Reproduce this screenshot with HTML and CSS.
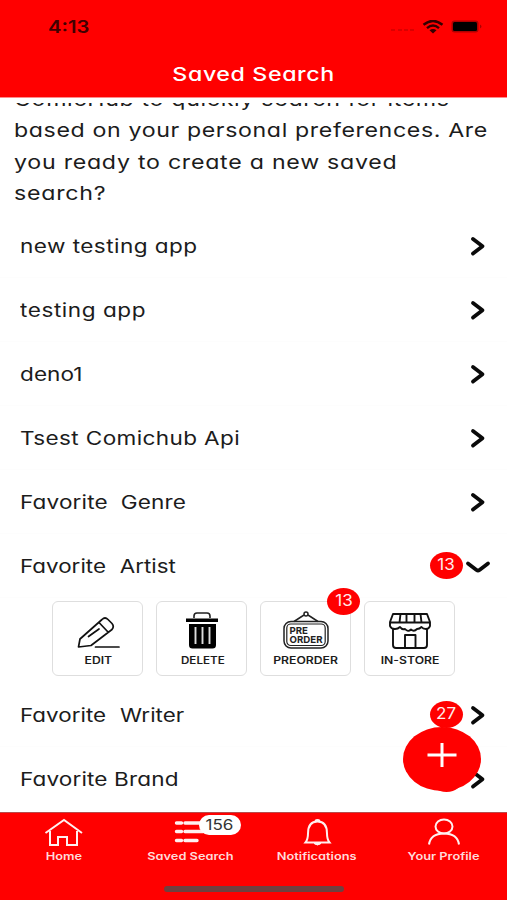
FILE: index.html
```html
<!DOCTYPE html>
<html lang="en">
<head>
<meta charset="utf-8">
<title>Saved Search</title>
<link rel="stylesheet" href="styles.css">
</head>
<body>
<div class="app">
  <header class="top">
    <div class="status">
      <span class="time"><span class="wide">4:13</span></span>
      <span class="signal">
        <svg class="dots" width="26" height="4" viewBox="0 0 26 4"><path d="M1 2h4M8 2h4M14 2h4M20 2h4"/></svg>
        <svg width="22" height="14" viewBox="0 0 22 14"><g fill="none" stroke="#300" stroke-width="2.4"><path d="M1.5 4.8Q11-3 20.500 4.800"/><path d="M5 8.200Q11 3 17 8.200"/></g><path d="M7.500 10.300Q11 7.500 14.500 10.300L11 13.500z" fill="#300"/></svg>
        <svg class="battery" width="32" height="14" viewBox="0 0 32 14"><rect x=".5" y=".5" width="27" height="12" rx="3" fill="#b00000"/><rect x="2" y="2" width="24" height="9" rx="1.500"/><path d="M29 4.500q3 2 0 4z" fill="#a00"/></svg>
      </span>
    </div>
    <h1 class="title"><span class="wide">Saved Search</span></h1>
  </header>
  <main class="content">
    <p class="intro">
      <span class="wide l1">ComicHub to quickly search for items</span>
      <span class="wide l2">based on your personal preferences. Are</span>
      <span class="wide l3">you ready to create a new saved</span>
      <span class="wide l4">search?</span>
    </p>
    <ul class="list">
      <li class="row"><span class="wide r1">new testing app</span><svg class="chev" viewBox="0 0 18 22"><path d="M5 4l9.500 7.200L5 18.500"/></svg></li>
      <li class="row"><span class="wide r2">testing app</span><svg class="chev" viewBox="0 0 18 22"><path d="M5 4l9.500 7.200L5 18.500"/></svg></li>
      <li class="row"><span class="wide r3">deno1</span><svg class="chev" viewBox="0 0 18 22"><path d="M5 4l9.500 7.200L5 18.500"/></svg></li>
      <li class="row"><span class="wide r4">Tsest Comichub Api</span><svg class="chev" viewBox="0 0 18 22"><path d="M5 4l9.500 7.200L5 18.500"/></svg></li>
      <li class="row"><span class="wide r5">Favorite&nbsp; Genre</span><svg class="chev" viewBox="0 0 18 22"><path d="M5 4l9.500 7.200L5 18.500"/></svg></li>
      <li class="row open"><span class="wide r6">Favorite&nbsp; Artist</span><b class="badge"><span class="wide">13</span></b><svg class="down" viewBox="0 0 26 22"><path d="M3 8.500L11.500 15Q13 16 14.500 15L23 8.500"/></svg></li>
      <li class="tiles">
        <div class="tile">
          <svg width="44" height="40" viewBox="0 0 44 40" fill="none" stroke="#111" stroke-width="1.700" stroke-linejoin="round" stroke-linecap="round"><path d="M2.500 36L4 28 26 8.500q3-3 6 0l4 4q2.500 3 0 6L15 34.500zM23 11.500l9 9.500M12.500 25.500l10.500-7.500M19.500 36h23.500"/></svg>
          <span class="wide">EDIT</span>
        </div>
        <div class="tile">
          <svg width="34" height="40" viewBox="0 0 34 40"><path d="M9 7V5q0-3 3-3h10q3 0 3 3v2" fill="none" stroke="#222" stroke-width="1.600"/><path d="M1 7.500h32V11H1zM4 13h27v21q0 3.500-3.500 3.500h-20Q4 37.500 4 34z"/><path d="M10.500 16v17M17.500 16v17M24.500 16v17" stroke="#ddd" stroke-width="1.900"/></svg>
          <span class="wide t-del">DELETE</span>
        </div>
        <div class="tile">
          <b class="badge over"><span class="wide">13</span></b>
          <svg width="46" height="40" viewBox="0 0 46 40" fill="none" stroke="#222" stroke-width="1.500"><path d="M11 10.500l10-6.500M35 10.500L25 4"/><circle cx="23" cy="3" r="2"/><rect x="1" y="10.500" width="44" height="26.500" rx="7"/><rect x="3.800" y="13" width="38.400" height="21.500" rx="4" stroke-width="1.200"/><g class="sign"><text x="6.500" y="22.500" textLength="18.500" lengthAdjust="spacingAndGlyphs">PRE</text><text x="6.500" y="31.500" textLength="33" lengthAdjust="spacingAndGlyphs">ORDER</text></g></svg>
          <span class="wide">PREORDER</span>
        </div>
        <div class="tile">
          <svg width="44" height="40" viewBox="0 0 44 40" fill="none" stroke="#111" stroke-width="1.900" stroke-linejoin="round"><path d="M5 3h34l3 8v4q-1 3-4 3-3 0-4.500-2-2 2-4.500 2-3 3-6 .500Q20 21.500 17 18q-3 1-5-2-2 2-5 2-4 0-5-3v-4zM2 11.500h40M12.500 3l-1 8.500M18.500 3v8.500M26.500 3v8.500M32.500 3l1 8.500M5 18v16q0 3 3 3h28q3 0 3-3V18M17 37V24h10.500v13"/></svg>
          <span class="wide">IN-STORE</span>
        </div>
      </li>
      <li class="row"><span class="wide r7">Favorite&nbsp; Writer</span><b class="badge"><span class="wide">27</span></b><svg class="chev" viewBox="0 0 18 22"><path d="M5 4l9.500 7.200L5 18.500"/></svg></li>
      <li class="row"><span class="wide r8">Favorite Brand</span><b class="badge blank"></b><svg class="chev" viewBox="0 0 18 22"><path d="M5 4l9.500 7.200L5 18.500"/></svg></li>
    </ul>
    <button class="fab" aria-label="Add"><svg width="30" height="26" viewBox="0 0 30 26"><path d="M15 1v24M.5 13h29" stroke="#fff" stroke-width="3"/></svg></button>
  </main>
  <nav class="tabs">
    <a class="tab"><svg width="40" height="30" viewBox="0 0 40 30"><path d="M2.500 15L21 2l18 13M7 13v14h8v-8h9v8h10V13"/></svg><span class="wide t1">Home</span></a>
    <a class="tab"><svg width="40" height="30" viewBox="0 0 40 30"><path d="M6.500 5h5M6.500 13.500h5M6.500 22.500h5M15 5h20M15 13.500h18M15 22.500h12" stroke-width="3.400" stroke-linecap="round"/></svg><b class="count"><span class="wide">156</span></b><span class="wide t2">Saved Search</span></a>
    <a class="tab"><svg width="40" height="30" viewBox="0 0 40 30"><path d="M8.500 24.500q2.500-3 2.500-9Q11 3.500 20.500 3.500T30 15.500q0 6 2.500 9zM18 3q2.500-2 5 0"/><path d="M17 25.500h7q-3.500 3-7 0z" fill="#fff" stroke-width="1"/></svg><span class="wide t3">Notifications</span></a>
    <a class="tab"><svg width="40" height="30" viewBox="0 0 40 30"><ellipse cx="20" cy="8.500" rx="8.500" ry="7"/><path d="M5 26.500q1.500-11 15-11t15 11"/></svg><span class="wide t4">Your Profile</span></a>
    <i class="handle"></i>
  </nav>
</div>
</body>
</html>
```
FILE: styles.css
```css
* { box-sizing: border-box; }
body { margin: 0; font-family: Inter, "Open Sans", sans-serif; color: #1c1c1c; background: #fff; }
.app { width: 507px; height: 900px; display: flex; flex-direction: column; overflow: hidden; }
.wide { display: inline-block; white-space: nowrap; transform: scaleX(1.22); transform-origin: left center; font-feature-settings: "cv11", "ss03"; }

.top { height: 98px; flex: none; background: #f00; border-bottom: 1px solid #ff8a8a; box-shadow: 0 5px 0 #fff; position: relative; z-index: 2; }
.status { height: 54px; display: flex; justify-content: space-between; align-items: center; padding: 0 24px 0 48px; }
.time { font-size: 17px; font-weight: 600; color: #400000; }
.time .wide { transform: scaleX(1.19); }
.signal { display: flex; align-items: center; gap: 6px; }
.dots { fill: none; stroke: #d00000; stroke-width: 1.5; margin-top: 6px; }
.battery { margin-left: 1px; }
.title { margin: 0; font-size: 19px; line-height: 42px; font-weight: 500; color: #fff; text-align: center; }
.title .wide { transform-origin: center; letter-spacing: .5px; }

.content { flex: 1; min-height: 0; position: relative; }
.intro { margin: -14px 0 0; padding-left: 14px; font-size: 19px; line-height: 31.3px; display: flex; flex-direction: column; align-items: flex-start; }
.intro .l1 { letter-spacing: .54px; }
.intro .l2 { letter-spacing: .5px; }
.intro .l3, .intro .l4 { letter-spacing: .6px; }

.list { list-style: none; margin: 5px 0 0; padding: 0; }
.row { height: 64px; display: flex; align-items: center; padding: 0 21.500px 0 20px; font-size: 18.500px; border-bottom: 1px solid #fdfdfd; }
.row > .wide { margin-right: auto; letter-spacing: .3px; }
.row > .r1 { letter-spacing: .36px; }
.row > .r2 { letter-spacing: .45px; }
.row > .r3 { letter-spacing: .05px; }
.row > .r5 { letter-spacing: .12px; }
.row > .r6 { letter-spacing: 0; word-spacing: .5px; }
.row > .r7 { letter-spacing: .02px; word-spacing: .5px; }
.row > .r8 { letter-spacing: .1px; }
.row > .r6, .row > .r7 { transform: scaleX(1.21); }
.chev { width: 18px; height: 22px; }
.down { width: 26px; height: 22px; margin-right: -5px; }
.chev path, .down path { fill: none; stroke: #0a0a0a; stroke-width: 3.800; stroke-linecap: round; stroke-linejoin: round; }
.badge { width: 33px; height: 27px; border-radius: 50%; background: #f00; color: #ffecec; font-size: 15.500px; font-weight: 400; line-height: 26px; text-align: center; margin-right: 5px; }
.badge .wide { transform: scaleX(1.1); transform-origin: center; }
.open .badge { margin-right: 2px; }

.tiles { display: flex; gap: 13px; padding: 3px 52px 8px; height: 85px; }
.tile { width: 91px; height: 75px; border: 1.500px solid #dedede; border-radius: 6px; display: flex; flex-direction: column; align-items: center; padding-top: 9px; position: relative; }
.tile > .wide { font-size: 10px; font-weight: 600; line-height: 18px; transform-origin: center; margin-left: 1px; }
.tile > .t-del { transform: scaleX(1.16); margin-left: 2px; }
.tile > .over { position: absolute; right: -10px; top: -14px; margin: 0; }
.sign { fill: #222; stroke: none; font-size: 9.500px; font-weight: 700; }

.fab { position: absolute; left: 403px; top: 629px; width: 78px; height: 64px; border: 0; border-radius: 50%; background: #f00; display: flex; align-items: center; justify-content: center; padding: 0 0 8px; }

.tabs { height: 88px; flex: none; background: #f00; border-top: 1px solid #b84a4a; display: flex; position: relative; z-index: 2; }
.tab { flex: 1; display: flex; flex-direction: column; align-items: center; padding-top: 5px; position: relative; color: #ffdada; font-size: 10.500px; font-weight: 600; }
.tab svg { fill: none; stroke: #fff0f0; stroke-width: 2; }
.tab .wide { transform-origin: center; line-height: 18px; }
.tab .t1 { margin-left: 1px; }
.count { position: absolute; left: 72px; top: 2px; width: 42px; height: 20px; border-radius: 10px; background: #fff; color: #333; font-size: 14px; font-weight: 400; display: flex; justify-content: center; align-items: center; }
.handle { position: absolute; left: 164px; top: 73px; width: 180px; height: 6px; border-radius: 3px; background: #704040; }
```
